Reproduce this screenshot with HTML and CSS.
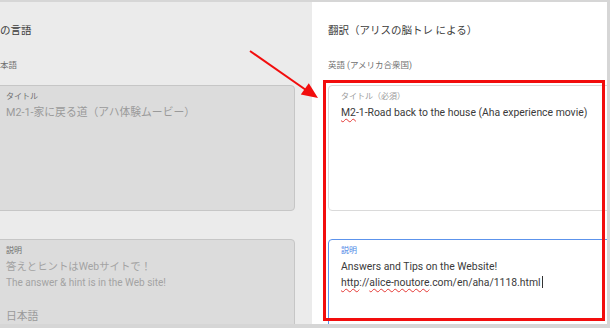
FILE: index.html
```html
<!DOCTYPE html>
<html lang="ja">
  <head>
    <meta charset="UTF-8" />
    <meta name="viewport" content="width=device-width, initial-scale=1.0" />
    <title>翻訳</title>
    <link rel="stylesheet" href="styles.css">
  </head>
  <body>
    <div class="frame">
      <div class="source">
        <div class="source-inner">
          <h2 class="col-title">の言語</h2>
          <p class="lang">本語</p>
          <div class="field field-title disabled">
            <div class="field-label">タイトル</div>
            <div class="field-text">M2-1-家に戻る道（アハ体験ムービー）</div>
          </div>
          <div class="field field-desc disabled">
            <div class="field-label">説明</div>
            <div class="field-text">答えとヒントはWebサイトで！</div>
            <div class="field-text small">The answer &amp; hint is in the Web site!</div>
            <div class="field-text">&nbsp;</div>
            <div class="field-text">日本語</div>
          </div>
        </div>
      </div>
      <div class="target">
        <h2 class="col-title">翻訳（アリスの脳トレ による）</h2>
        <p class="lang">英語 (アメリカ合衆国)</p>
        <div class="field field-title">
          <div class="field-label">タイトル（必須）</div>
          <div class="field-text"><span class="typo">M2</span>-1-Road back to the house (Aha experience movie)</div>
        </div>
        <div class="field field-desc focused">
          <div class="field-label">説明</div>
          <div class="field-text">Answers and Tips on the Website!</div>
          <div class="field-text"><span class="typo">http</span>://<span class="typo">alice-noutore</span>.com/en/aha/1118.html<span class="caret"></span></div>
        </div>
      </div>
    </div>

    <!-- annotation -->
    <div class="highlight"></div>
    <svg class="arrow" width="610" height="328" viewBox="0 0 610 328">
      <line x1="250" y1="51" x2="306" y2="90" stroke="#f20d0d" stroke-width="2" />
      <polygon points="318,98 300.8,94.5 308.8,83.2" fill="#f20d0d" />
    </svg>
  </body>
</html>
```

FILE: styles.css
```css
body {
  margin: 0;
  position: relative;
  width: 610px;
  height: 328px;
  overflow: hidden;
  font-family: Roboto, "Noto Sans CJK JP", sans-serif;
}

.frame {
  box-sizing: border-box;
  width: 610px;
  height: 328px;
  display: flex;
  border-top: 2px solid #d6d6d6;
  border-right: 3px solid #d6d6d6;
  border-bottom: 4px solid #d6d6d6;
  overflow: hidden;
}

.source {
  flex: none;
  width: 312px;
  background: #ebebeb;
  overflow: hidden;
}

.source-inner {
  margin-left: -23px;
  padding: 0 17px 0 16px;
}

.source-inner .col-title,
.source-inner .lang {
  margin-left: 7px;
}

.target {
  flex: 1;
  background: #fff;
  overflow: hidden;
  padding-left: 16px;
}

.col-title {
  margin: 21px 0 0;
  font-size: 10.5px;
  line-height: 16px;
  font-weight: 400;
  color: #3c3c3c;
  white-space: nowrap;
}

.lang {
  margin: 20px 0 0;
  font-size: 8.5px;
  line-height: 12px;
  color: #6f6f6f;
  white-space: nowrap;
}

.field {
  box-sizing: border-box;
  margin-top: 14px;
  padding: 5px 12px 0;
  border: 1px solid #dadada;
  border-radius: 4px;
  background: #fff;
  width: 292px;
  white-space: nowrap;
}

.field-title {
  height: 126px;
}

.field-desc {
  height: 130px;
  margin-top: 28px;
}

.field.disabled {
  width: auto;
  background: #dcdcdc;
  border-color: #c6c6c6;
}

.field.focused {
  border-color: #5c93ec;
}

.field-label {
  font-size: 8px;
  line-height: 12px;
  color: #9a9a9a;
}

.focused .field-label {
  color: #4a85e6;
}

.disabled .field-label {
  color: #6e6e6e;
}

.field-text {
  margin-top: 2px;
  font-size: 10.4px;
  line-height: 16px;
  color: #3a3a3a;
}

.field-text + .field-text {
  margin-top: 0;
}

.disabled .field-text {
  color: #a3a3a3;
}

.field-text.small {
  font-size: 10px;
}

.disabled .field-text:last-child {
  margin-top: 2px;
  font-size: 10.8px;
  color: #9a9a9a;
}

.typo {
  text-decoration: underline wavy #e53935;
  text-decoration-thickness: 1px;
  text-underline-offset: 2px;
}

.caret {
  display: inline-block;
  width: 1px;
  height: 12px;
  margin-left: 1px;
  vertical-align: -2px;
  background: #333;
}

.highlight {
  position: absolute;
  left: 323px;
  top: 80px;
  width: 282px;
  height: 241px;
  box-sizing: border-box;
  border: 3px solid #f20d0d;
}

.arrow {
  position: absolute;
  left: 0;
  top: 0;
}
```
